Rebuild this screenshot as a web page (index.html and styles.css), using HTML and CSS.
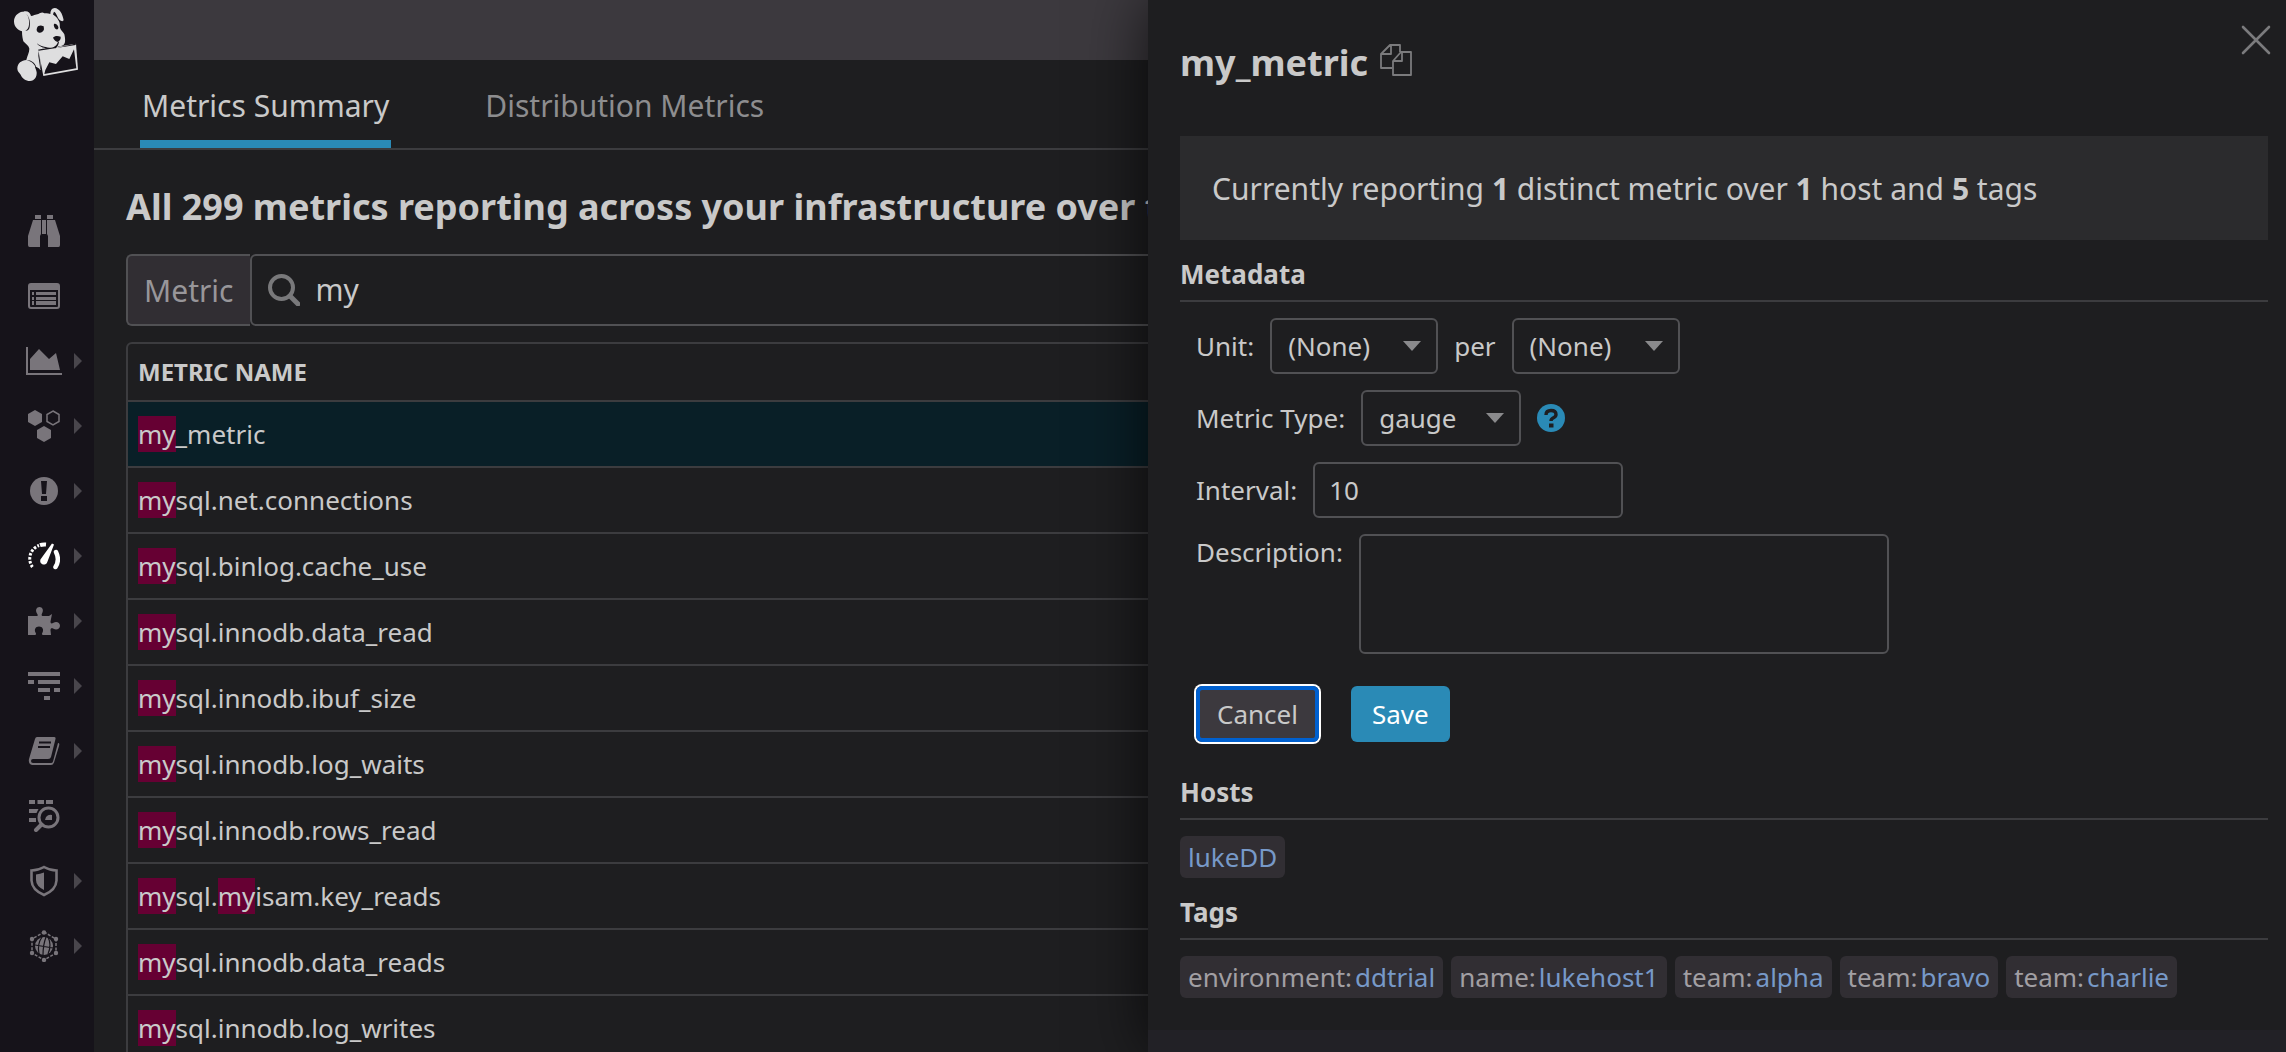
FILE: index.html
```html
<!DOCTYPE html>
<html lang="en">
<head>
<meta charset="utf-8">
<title>Metrics Summary</title>
<link rel="stylesheet" href="styles.css">
</head>
<body>
<div class="app">
  <aside class="sidebar">
    <a class="logo" href="#" aria-label="Home">
      <svg viewBox="42 24 192 219" width="64" height="73">
        <g fill="#dededf">
          <path d="M66 35C51 39 42 50 42 64c0 16 11 27 24 30 0 14 2 22 4 30 8 8 17 14 18 22 0 13-7 22-9 34-14 1-27 9-27 26 0 8 6 12 10 18 4 11 15 19 28 19 14 0 21-13 20-26-1-7-4-13-5-17 6 0 12 4 15 9l3-1-3-58c9-1 20-1 28 2 7 2 14-2 24-7l3-7c5 0 12 0 16-4 7-5 4-23 2-31-4-9-11-12-13-20-1-5 0-12-2-17-6-12-8-14-16-20-4-3-7-4-11-4-6-3-12-3-18-2-7-5-13 0-18 2-8 2-16 5-22 6-2-8-8-14-16-14-3 0-5 0-7 1z"/>
          <path d="M151 42c0-10 4-17 13-18 14 1 24 17 27 37l-4 3c-9-2-13-9-17-19-2-5-4-8-8-10l-3 8 6 12z"/>
          <path d="M115 149l113-18 6 78-104 19z"/>
        </g>
        <g fill="#16131a">
          <path d="M79 42c8 9 9 20 8 32-1 8-4 15-11 18 7 1 12-4 13-11 2-14 0-29-10-39z"/>
          <path d="M111 84c2-6 8-8 14-7l6 2 1 9c-2 7-8 11-15 10-6-2-9-7-6-14zM162 72c5-3 11 3 13 9 1 6-3 9-8 6-4-4-7-10-5-15zM159 113c5-6 14-6 23-3 1 8-3 12-9 16-5-2-10-5-14-13z"/>
          <path d="M110 129c11 10 23 12 38 14 14 0 22-6 26-18h3c-1 10-6 17-11 20 20-5 45-9 62-15l-1 5-111 17-2-3c9-2 19-3 27-4-11-1-25-6-31-16z"/>
          <path d="M136 210l12-23 20 5 20-23 20 8 14-29 7 57-96 17z"/>
          <path d="M79 180c17-1 30 12 32 30l-3-4c-3-13-14-23-29-26z"/>
          <path d="M116 152l7 54-2 2-6-40z"/>
        </g>
      </svg>
    </a>
    <nav class="nav">
      <a class="nav-item" href="#" aria-label="Watchdog">
        <svg viewBox="0 0 32 32" width="32" height="32" fill="currentColor"><path d="M7 0h6v4H7zM19 0h6v4h-6zM5 5h8v14l-1 2v11H1.500Q0 32 0 30v-9zM27 5h-8v14l1 2v11h10.500q1.500 0 1.500-2v-9zM14 5h4v14h-4z"/></svg>
      </a>
      <a class="nav-item" href="#" aria-label="Events">
        <svg viewBox="0 0 32 32" width="32" height="32"><rect x="1" y="4" width="30" height="24" rx="2" fill="none" stroke="currentColor" stroke-width="2"/><path d="M1 4h30v6H1zM4 12h2v3H4zM4 17h2v3H4zM4 21h2v4H4zM8 12h20v3H8zM8 17h20v3H8zM8 21h20v4H8z" fill="currentColor"/></svg>
      </a>
      <a class="nav-item" href="#" aria-label="Dashboards">
        <svg viewBox="0 0 36 32" width="36" height="32" fill="currentColor"><path d="M0 2h2v26h34v2H0zM4 25V14L13 4l10 10 7-6 4 17z"/></svg>
        <span class="arrow"></span>
      </a>
      <a class="nav-item" href="#" aria-label="Infrastructure">
        <svg viewBox="0 0 32 32" width="32" height="32" fill="currentColor"><path d="M7 0l7 4v8l-7 4-7-4V4zM16 16l7 4v8l-7 4-7-4v-8z"/><path d="M25 1l6 3.500v7L25 15l-6-3.500v-7z" fill="none" stroke="currentColor" stroke-width="1.500"/></svg>
        <span class="arrow"></span>
      </a>
      <a class="nav-item" href="#" aria-label="Monitors">
        <svg viewBox="0 0 32 32" width="32" height="32"><circle cx="16" cy="16" r="14" fill="currentColor"/><path d="M13 6h6l-1 13h-4zM13 21h6v5h-6z" fill="#16131a"/></svg>
        <span class="arrow"></span>
      </a>
      <a class="nav-item nav-item-active" href="#" aria-label="Metrics" aria-current="page">
        <svg viewBox="0 0 32 32" width="32" height="32"><g fill="none" stroke="currentColor"><path d="M4.500 27A14 14 0 0 1 11 5.500" stroke-width="3" stroke-dasharray="2.500 1.500"/><path d="M12 5.200Q14.500 4.300 18 4.600" stroke-width="4"/><path d="M28 12Q32 20 27.500 27" stroke-width="4.500" stroke-linecap="round"/></g><path d="M24 3.500l2 1-6.500 17a3.700 3.700 0 1 1-6-3.500z" fill="currentColor"/></svg>
        <span class="arrow"></span>
      </a>
      <a class="nav-item" href="#" aria-label="Integrations">
        <svg viewBox="0 0 32 32" width="32" height="32" fill="currentColor"><path d="M0 11h9c1 0 1-1 0-2.500C7 5 8.500 2 11.500 2S16 5 14 8.500c-1 2 0 2.500 1 2.500h6l3-2-1.500 7.500c0 2 1 2.500 3 1.200 3-2 6.500 0 6.500 3s-3.500 5-6.500 3c-2-1-3-.500-3 1.500L23 30h-8c-1 0-1.500-1-.5-2.500 1.500-3 0-6-3.500-6s-5 3-3.500 6c1 1.500.5 2.500-.5 2.500H0z"/></svg>
        <span class="arrow"></span>
      </a>
      <a class="nav-item" href="#" aria-label="APM">
        <svg viewBox="0 0 32 32" width="32" height="32" fill="currentColor"><path d="M0 2h32v4H0zM0 10h6v4H0zM10 10h22v4H10zM10 18h12v4H10zM26 18h6v4h-6zM16 26h6v4h-6z"/></svg>
        <span class="arrow"></span>
      </a>
      <a class="nav-item" href="#" aria-label="Notebooks">
        <svg viewBox="0 0 32 32" width="32" height="32"><path d="M9 2h17q2 0 1.500 2L23 22q-.5 2-3 2H5q-2 0-2 2t2 2h18q1.500 0 2-1.500L30 8q2 0 1 3l-5 16.500q-1 2.500-3 2.500H4q-4-1-3-6L7 4q.5-2 2-2z" fill="currentColor"/><path d="M11 7.500h12M10 12h12" stroke="#16131a" stroke-width="1.800"/></svg>
        <span class="arrow"></span>
      </a>
      <a class="nav-item" href="#" aria-label="Logs">
        <svg viewBox="0 0 32 32" width="32" height="32"><path d="M1 0h6v4H1zM9.500 0H16v4H9.500zM18 0h7v4h-7zM1 9h9.500l-2 4H1zM1 18h7v4H1zM17 20l1-3q2.500-3 6-2v5z" fill="currentColor"/><circle cx="20.500" cy="17.500" r="9.500" fill="none" stroke="currentColor" stroke-width="3"/><path d="M13.500 24.500L8 30" stroke="currentColor" stroke-width="4" stroke-linecap="round"/></svg>
      </a>
      <a class="nav-item" href="#" aria-label="Security">
        <svg viewBox="0 0 32 32" width="32" height="32"><path d="M16 2q6 3.500 12.500 3.500v10Q28 25 16 30 4 25 3.500 15.500v-10Q10 5.500 16 2z" fill="none" stroke="currentColor" stroke-width="2.600"/><path d="M16 7.500V25Q8 21 8 15V9.500q4-.5 8-2z" fill="currentColor"/></svg>
        <span class="arrow"></span>
      </a>
      <a class="nav-item" href="#" aria-label="Synthetics">
        <svg viewBox="0 0 32 32" width="32" height="32"><path d="M16 2l12 7v14l-12 7-12-7V9z" fill="none" stroke="currentColor" stroke-width="1.500" stroke-dasharray="3 1.500"/><g fill="currentColor"><circle cx="16" cy="2.500" r="2.200"/><circle cx="28" cy="9" r="2.200"/><circle cx="28" cy="23" r="2.200"/><circle cx="16" cy="30" r="2.200"/><circle cx="4" cy="9" r="2.200"/><circle cx="4" cy="23" r="2.200"/><circle cx="16" cy="16" r="9"/></g><g fill="none" stroke="#16131a" stroke-width="1.200"><path d="M7 15l18 3M18 7q-3 8-3 18M14 7q-5 7-3 17M20 7q4 8 0 17"/></g></svg>
        <span class="arrow"></span>
      </a>
    </nav>
  </aside>

  <main class="main">
    <div class="topbar"></div>
    <nav class="tabs">
      <a class="tab tab-active" href="#">Metrics Summary</a>
      <a class="tab" href="#">Distribution Metrics</a>
    </nav>
    <section class="content">
      <h1 class="heading">All 299 metrics reporting across your infrastructure over the past hour</h1>
      <div class="search">
        <label class="search-label" for="metric-search">Metric</label>
        <div class="search-box">
          <svg viewBox="0 0 32 32" width="32" height="32" fill="none" stroke="currentColor"><circle cx="13.500" cy="13.500" r="11.500" stroke-width="4"/><path d="M22 22l8 8" stroke-width="5" stroke-linecap="round"/></svg>
          <input class="search-input" id="metric-search" type="text" value="my">
        </div>
      </div>
      <table class="metrics">
        <thead><tr><th>METRIC NAME</th></tr></thead>
        <tbody>
          <tr class="selected"><td><mark>my</mark>_metric</td></tr>
          <tr><td><mark>my</mark>sql.net.connections</td></tr>
          <tr><td><mark>my</mark>sql.binlog.cache_use</td></tr>
          <tr><td><mark>my</mark>sql.innodb.data_read</td></tr>
          <tr><td><mark>my</mark>sql.innodb.ibuf_size</td></tr>
          <tr><td><mark>my</mark>sql.innodb.log_waits</td></tr>
          <tr><td><mark>my</mark>sql.innodb.rows_read</td></tr>
          <tr><td><mark>my</mark>sql.<mark>my</mark>isam.key_reads</td></tr>
          <tr><td><mark>my</mark>sql.innodb.data_reads</td></tr>
          <tr><td><mark>my</mark>sql.innodb.log_writes</td></tr>
        </tbody>
      </table>
    </section>
  </main>

  <aside class="panel">
    <div class="panel-body">
      <header class="panel-header">
        <h2 class="panel-title">my_metric</h2>
        <button class="icon-button copy" type="button" aria-label="Copy name">
          <svg viewBox="0 0 32 32" width="32" height="32" fill="none" stroke="currentColor" stroke-width="1.800" stroke-linejoin="round"><path d="M12 24H1V10l9-9h10v7M11 1v9H1M13 17l8-9h10v23H13zM22 8v9h-9"/></svg>
        </button>
        <button class="icon-button close" type="button" aria-label="Close">
          <svg viewBox="0 0 30 30" width="30" height="30" stroke="currentColor" stroke-width="2.600" stroke-linecap="round"><path d="M2 2l26 26M28 2L2 28"/></svg>
        </button>
      </header>
      <p class="banner">Currently reporting <b>1</b> distinct metric over <b>1</b> host and <b>5</b> tags</p>

      <h3 class="section-title">Metadata</h3>
      <form class="form">
        <div class="field">
          <label for="unit">Unit:</label>
          <span class="select"><select id="unit"><option>(None)</option></select></span>
          <label for="per">per</label>
          <span class="select"><select id="per"><option>(None)</option></select></span>
        </div>
        <div class="field">
          <label for="type">Metric Type:</label>
          <span class="select select-type"><select id="type"><option>gauge</option></select></span>
          <button class="icon-button help" type="button" aria-label="Help"><svg viewBox="0 0 28 28" width="28" height="28"><circle cx="14" cy="14" r="14" fill="currentColor"/><path d="M9 11q0-4.500 5-4.500t5 4q0 2-2.500 3.300T14 17" fill="none" stroke="#1e1e20" stroke-width="3.400"/><path d="M12 19.500h4.500v4H12z" fill="#1e1e20"/></svg></button>
        </div>
        <div class="field">
          <label for="interval">Interval:</label>
          <input class="text-input" id="interval" type="text" value="10">
        </div>
        <div class="field field-top">
          <label for="description">Description:</label>
          <textarea class="text-area" id="description"></textarea>
        </div>
        <div class="actions">
          <button class="button button-cancel" type="button">Cancel</button>
          <button class="button button-save" type="submit">Save</button>
        </div>
      </form>

      <h3 class="section-title">Hosts</h3>
      <div class="chips"><a class="chip" href="#">lukeDD</a></div>

      <h3 class="section-title">Tags</h3>
      <div class="chips">
        <a class="chip" href="#"><span>environment:</span>ddtrial</a>
        <a class="chip" href="#"><span>name:</span>lukehost1</a>
        <a class="chip" href="#"><span>team:</span>alpha</a>
        <a class="chip" href="#"><span>team:</span>bravo</a>
        <a class="chip" href="#"><span>team:</span>charlie</a>
      </div>
    </div>
  </aside>
</div>
</body>
</html>
```
FILE: styles.css
```css
* {
  box-sizing: border-box;
}

body {
  margin: 0;
  background: #1e1e20;
  color: #c9c9c9;
  font-family: "Noto Sans", sans-serif;
  font-size: 26px;
  line-height: 36px;
}

button,
input,
select,
textarea {
  font: inherit;
  color: inherit;
}

a {
  color: inherit;
  text-decoration: none;
}

svg {
  display: block;
}

.app {
  position: relative;
  display: flex;
  height: 100vh;
  overflow: hidden;
}

/* Sidebar */

.sidebar {
  flex: none;
  width: 94px;
  background: #16131a;
}

.logo {
  display: block;
  height: 198px;
  padding: 8px 14px;
}

.nav-item {
  display: flex;
  align-items: center;
  justify-content: center;
  position: relative;
  height: 65px;
  padding-right: 6px;
  color: #79757b;
}

.nav-item-active {
  color: #fff;
}

.arrow {
  position: absolute;
  right: 12px;
  border: 8px solid transparent;
  border-left-color: #49464c;
  border-right: 0;
}

/* Main column */

.main {
  flex: 1;
  min-width: 0;
}

.topbar {
  height: 60px;
  background: #3c393e;
}

.tabs {
  display: flex;
  gap: 92px;
  height: 90px;
  padding-left: 46px;
  border-bottom: 2px solid #3c3c3f;
  font-size: 30px;
  color: #8d8d8f;
}

.tab {
  padding: 28px 2px 0;
  white-space: nowrap;
}

.tab-active {
  color: #c9c9c9;
  border-bottom: 8px solid #2a8ab6;
}

.content {
  padding: 32px;
}

.heading {
  margin: 0 0 22px;
  font-size: 36px;
  line-height: 50px;
  white-space: nowrap;
}

.search {
  display: flex;
  height: 72px;
  margin-bottom: 16px;
  font-size: 30px;
}

.search-label {
  display: flex;
  align-items: center;
  padding: 2px 16px 0;
  border: 2px solid #515154;
  border-right: 0;
  border-radius: 6px 0 0 6px;
  background: #312e33;
  color: #98969a;
}

.search-box {
  flex: 1;
  display: flex;
  align-items: center;
  gap: 16px;
  padding: 0 16px;
  border: 2px solid #515154;
  border-radius: 6px;
  color: #79797b;
}

.search-input {
  flex: 1;
  padding: 0;
  border: 0;
  outline: 0;
  background: none;
  color: #c9c9c9;
}

.metrics {
  width: 100%;
  border: 2px solid #3c3c3f;
  border-radius: 6px;
  border-spacing: 0;
}

.metrics th,
.metrics td {
  padding: 0 10px;
  border-bottom: 2px solid #3c3c3f;
  text-align: left;
}

.metrics th {
  height: 58px;
  font-size: 24px;
}

.metrics td {
  height: 66px;
}

.selected td {
  background: #091f27;
}

mark {
  background: #660033;
  color: inherit;
}

/* Detail panel */

.panel {
  position: absolute;
  inset: 0 0 0 auto;
  width: calc(50% - 5px);
  background: #222126;
  box-shadow: 0 0 60px rgba(0, 0, 0, 0.7);
}

.panel-body {
  padding: 0 18px 32px 32px;
  background: #1e1e20;
}

.panel-header {
  display: flex;
  align-items: center;
  gap: 12px;
  height: 136px;
  padding-bottom: 10px;
}

.panel-title {
  margin: 0;
  font-size: 36px;
}

.icon-button {
  padding: 0;
  border: 0;
  background: none;
  color: #7b7b7d;
}

.copy {
  padding-bottom: 6px;
}

.close {
  position: absolute;
  top: 25px;
  right: 15px;
}

.banner {
  margin: 0 0 16px;
  padding: 33px 32px 31px;
  background: #2b2b2d;
  font-size: 30px;
  line-height: 40px;
}

.section-title {
  margin: 0 0 16px;
  padding-bottom: 8px;
  border-bottom: 2px solid #3c3c3f;
  font-size: 26px;
}

.form {
  display: flex;
  flex-direction: column;
  gap: 16px;
  padding: 0 16px 32px;
}

.field {
  display: flex;
  align-items: center;
  gap: 16px;
}

.field-top {
  align-items: flex-start;
}

.select {
  position: relative;
  display: flex;
  align-items: center;
  width: 168px;
}

.select-type {
  width: 160px;
}

.select::after {
  content: "";
  position: absolute;
  right: 17px;
  border: 9px solid transparent;
  border-top: 10px solid #8a8a8c;
  border-bottom: 0;
  pointer-events: none;
}

select,
.text-input,
.text-area {
  height: 56px;
  padding: 0 14px;
  border: 2px solid #515154;
  border-radius: 6px;
  background: #1e1e20;
}

select {
  width: 100%;
  padding: 0 16px;
  appearance: none;
}

.help {
  color: #2a8ab6;
}

.text-input {
  width: 310px;
}

.text-area {
  width: 530px;
  height: 120px;
  resize: none;
}

.actions {
  display: flex;
  gap: 32px;
  padding-top: 16px;
}

.button {
  height: 56px;
  padding: 0 21px;
  border: 0;
  border-radius: 6px;
}

.button-cancel {
  background: #3c393e;
  box-shadow: inset 0 0 0 4px #0060cf, 0 0 0 2px #fff;
}

.button-save {
  background: #2a8ab6;
  color: #fff;
}

.chips {
  display: flex;
  flex-wrap: wrap;
  gap: 8px;
  margin-bottom: 16px;
}

.chips:last-child {
  margin-bottom: 0;
}

.chip {
  padding: 3px 8px;
  border-radius: 6px;
  background: #312e33;
  color: #7799c8;
}

.chip span {
  margin-right: 3px;
  color: #a19fa3;
}
```
